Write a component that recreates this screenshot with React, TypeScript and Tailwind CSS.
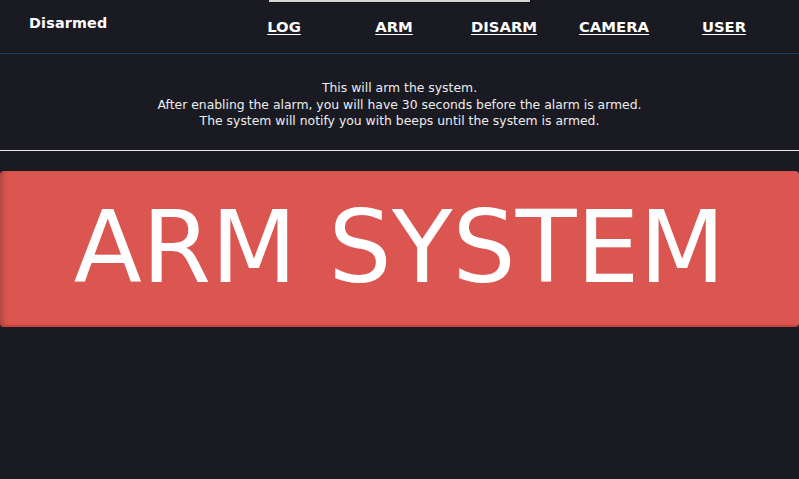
import React from 'react';

const navItems = ['LOG', 'ARM', 'DISARM', 'CAMERA', 'USER'];

const App: React.FC = () => {
  return (
    <div className="relative min-h-[479px] w-full bg-[#191a22] text-white font-['DejaVu_Sans',sans-serif]">
      {/* leftover strip peeking at the top */}
      <div className="absolute left-[268px] top-[-1px] h-[4px] w-[263px] border border-[#111] bg-[#d6d6d6]" />

      <header className="flex h-[54px] items-center border-b border-[#1f3b5c]">
        <div className="w-[229px] shrink-0 pl-[29px] pb-[5px] text-[14.3px] font-bold tracking-[0.2px]">Disarmed</div>
        <nav className="flex pt-[2px]">
          {navItems.map((item) => (
            <a
              key={item}
              className="w-[110px] text-center text-[14.8px] font-semibold underline underline-offset-[2px]"
            >
              {item}
            </a>
          ))}
        </nav>
      </header>

      <div className="flex flex-col items-center pt-[26px] pb-[20px] text-[12.4px] leading-[16.5px] text-[#eeeeee]">
        <p>This will arm the system.</p>
        <p>After enabling the alarm, you will have 30 seconds before the alarm is armed.</p>
        <p>The system will notify you with beeps until the system is armed.</p>
      </div>

      <div className="h-[1px] w-full bg-[#e6e6e6]" />

      <div className="pt-[20px]">
        <button className="flex h-[156px] w-full items-center justify-center rounded-[4px] border-b-2 border-[#c9403c] bg-[#dc5651] shadow-[inset_6px_0_6px_-4px_rgba(0,0,0,0.25)] text-[99.5px] leading-none text-white">
          ARM SYSTEM
        </button>
      </div>
    </div>
  );
};

export default App;
